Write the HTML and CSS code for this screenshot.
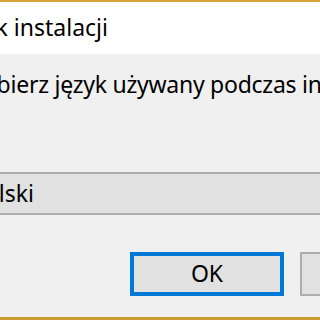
FILE: index.html
```html
<!DOCTYPE html>
<html lang="pl">
<head>
<meta charset="utf-8">
<title>Język instalacji</title>
<link rel="stylesheet" href="styles.css">
</head>
<body>
<div class="window">
  <div class="titlebar"><span class="title">Język instalacji</span></div>
  <div class="body">
    <p class="message">Wybierz język używany podczas instalacji:</p>
    <div class="combo"><span class="combo-text">Polski</span></div>
    <div class="buttons">
      <button class="btn btn-default">OK</button>
      <button class="btn">Anuluj</button>
    </div>
  </div>
</div>
</body>
</html>
```
FILE: styles.css
```css
html, body {
  margin: 0;
  padding: 0;
  width: 320px;
  height: 320px;
  overflow: hidden;
  background: #f0f0f0;
}
.window {
  width: 320px;
  height: 320px;
  box-sizing: border-box;
  border-top: 2px solid #d6a636;
  border-bottom: 3px solid #c99a2e;
  display: flex;
  flex-direction: column;
  font-family: "Noto Sans", "Open Sans", sans-serif;
  color: #000;
}
.titlebar {
  height: 52px;
  background: #fff;
  display: flex;
  align-items: center;
  flex: none;
}
.title {
  font-size: 23px;
  margin-left: -46px;
  white-space: nowrap;
  padding-bottom: 2px;
}
.body {
  flex: 1;
  display: flex;
  flex-direction: column;
}
.message {
  margin: 15px 0 0 -36px;
  font-size: 23px;
  line-height: 30px;
  letter-spacing: -0.25px;
  white-space: nowrap;
}
.combo {
  margin: 73px -20px 0 -30px;
  height: 43px;
  box-sizing: border-box;
  border: 2px solid #adadad;
  border-left: none;
  background: #e1e1e1;
  display: flex;
  align-items: center;
}
.combo-text {
  font-size: 23px;
  margin-left: 1px;
  padding-bottom: 2px;
}
.buttons {
  margin-top: 37px;
  display: flex;
  gap: 16px;
  padding-left: 130px;
}
.btn {
  flex: none;
  width: 154px;
  height: 44px;
  box-sizing: border-box;
  background: #e1e1e1;
  border: 2px solid #adadad;
  font-family: inherit;
  font-size: 23px;
  color: #000;
  padding: 0 0 2px;
  margin: 0;
}
.btn-default {
  border: 4px solid #0078d7;
}
```
